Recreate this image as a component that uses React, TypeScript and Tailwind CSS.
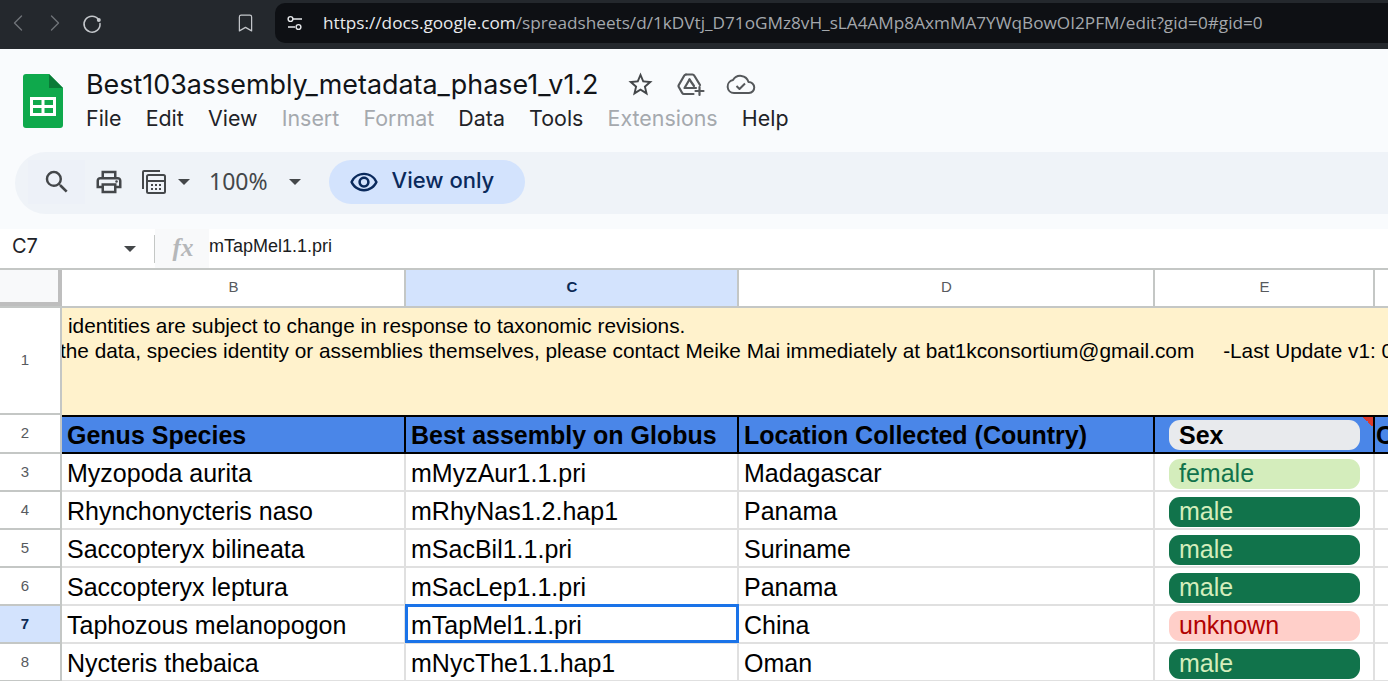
import React from "react";
import { ChevronLeft, ChevronRight, Bookmark } from "lucide-react";
import { MdOutlineSearch, MdOutlinePrint, MdOutlineRemoveRedEye, MdStarBorder } from "react-icons/md";

const rows = [
  { n: 3, a: "Myzopoda aurita", b: "mMyzAur1.1.pri", c: "Madagascar", s: "female" },
  { n: 4, a: "Rhynchonycteris naso", b: "mRhyNas1.2.hap1", c: "Panama", s: "male" },
  { n: 5, a: "Saccopteryx bilineata", b: "mSacBil1.1.pri", c: "Suriname", s: "male" },
  { n: 6, a: "Saccopteryx leptura", b: "mSacLep1.1.pri", c: "Panama", s: "male" },
  { n: 7, a: "Taphozous melanopogon", b: "mTapMel1.1.pri", c: "China", s: "unknown" },
  { n: 8, a: "Nycteris thebaica", b: "mNycThe1.1.hap1", c: "Oman", s: "male" },
];

function chip(s: string) {
  if (s === "female") return "bg-[#d4edbc] text-[#11734b]";
  if (s === "male") return "bg-[#11734b] text-[#d4edbc]";
  return "bg-[#ffcfc9] text-[#b10202]";
}

function Menu({ children, off }: { children: string; off?: boolean }) {
  return <span className={off ? "text-[#a5a9ae]" : "text-[#1f2328]"}>{children}</span>;
}

function ColHead({ w, label, active }: { w: string; label: string; active?: boolean }) {
  return (
    <div
      className={`${w} shrink-0 h-full flex items-center justify-center border-r-2 border-[#c4c7c5] pb-[2px] pl-[1px] text-[15px] ${
        active ? "bg-[#d3e3fd] text-[#0b2a55] font-bold" : "bg-white text-[#575a5e]"
      }`}
    >
      {label}
    </div>
  );
}

function RowHead({ n, active }: { n: number; active?: boolean }) {
  return (
    <div
      className={`w-[62px] shrink-0 flex items-center justify-center border-r-2 border-b-2 border-[#c4c7c5] pr-[10px] text-[15px] ${
        active ? "bg-[#d3e3fd] text-[#0b2a55] font-bold" : "bg-white text-[#575a5e]"
      }`}
    >
      {n}
    </div>
  );
}

export default function App() {
  return (
    <div className="w-[1388px] h-[681px] overflow-hidden bg-[#f9fbfd] flex flex-col font-['Inter',sans-serif]">
      {/* browser bar */}
      <div className="h-[49px] shrink-0 bg-[#24282d] flex items-start">
        <div className="w-[275px] h-[46px] flex items-center shrink-0 text-[#6f7378]">
          <ChevronLeft className="w-[28px] h-[30px] ml-[4px]" strokeWidth={1.2} />
          <ChevronRight className="w-[28px] h-[30px] ml-[9px]" strokeWidth={1.2} />
          <svg viewBox="0 0 24 24" className="w-[24px] h-[24px] ml-[11px] text-[#c4c7cb]" fill="none" stroke="currentColor" strokeWidth="1.5">
            <path d="M18.6 8.6A8 8 0 1 0 20 12.5" strokeLinecap="round" />
            <circle cx="18.8" cy="9" r="2" fill="currentColor" stroke="none" />
          </svg>
          <Bookmark className="w-[21px] h-[24px] ml-[131px] text-[#c4c7cb]" strokeWidth={1.4} />
        </div>
        <div className="flex-1 h-[40px] mt-[3px] bg-[#0e1014] rounded-l-[10px] flex items-center text-[17.2px] font-['Open_Sans',sans-serif] whitespace-nowrap">
          <svg viewBox="0 0 18 18" className="w-[18px] h-[18px] ml-[11px] text-[#e6e8ea]" fill="none" stroke="currentColor" strokeWidth="1.4">
            <circle cx="4.5" cy="5" r="2.4" />
            <path d="M7 5h9M2 13h7" />
            <circle cx="12.5" cy="13" r="2.4" />
          </svg>
          <span className="ml-[19px] text-[#e8eaed]">
            https://docs.google.com<span className="text-[#a4a8ad]">/spreadsheets/d/1kDVtj_D71oGMz8vH_sLA4AMp8AxmMA7YWqBowOI2PFM/edit?gid=0#gid=0</span>
          </span>
        </div>
      </div>

      {/* title */}
      <div className="h-[103px] shrink-0 flex">
        <svg viewBox="0 0 40 54" className="w-[40px] h-[54px] ml-[23px] mt-[25px] shrink-0">
          <path d="M3 0h23l14 14v37a3 3 0 0 1-3 3H3a3 3 0 0 1-3-3V3a3 3 0 0 1 3-3z" fill="#0fa94c" />
          <path d="M26 0l14 14H26z" fill="#0a7a37" />
          <path d="M7 23h26v19H7zM10 26v5h8.5v-5zM21.5 26v5H30v-5zM10 34v5h8.5v-5zM21.5 34v5H30v-5z" fill="#fff" fillRule="evenodd" />
        </svg>
        <div className="ml-[23px] pt-[17px]">
          <div className="flex items-center h-[36px]">
            <span className="text-[26.9px] text-[#111418] leading-none">Best103assembly_metadata_phase1_v1.2</span>
            <MdStarBorder className="w-[29px] h-[29px] ml-[28px] text-[#44474a]" />
            <svg viewBox="0 0 28 25" className="w-[28px] h-[25px] ml-[22px] text-[#55585b]" fill="none" stroke="currentColor" strokeWidth="2.2" strokeLinejoin="round" strokeLinecap="round">
              <path d="M9 2.5h6.5a2 2 0 0 1 1.7 1L23 13" />
              <path d="M9 2.5a2 2 0 0 0-1.7 1L1.8 13a2 2 0 0 0 0 2l3.4 6a2 2 0 0 0 1.8 1h9.5" />
              <path d="M12.5 7.5L7.5 16h11.5" />
              <path d="M12.5 7.5L17 14" />
              <path d="M22.5 15v8M18.5 19h8" />
            </svg>
            <svg viewBox="0 0 30 22" className="w-[30px] h-[22px] ml-[21px] text-[#55585b]" fill="none" stroke="currentColor" strokeWidth="2" strokeLinejoin="round">
              <path d="M8 20a6.5 6.5 0 0 1-1-12.9A8.5 8.5 0 0 1 22.5 9 5.5 5.5 0 0 1 23 20z" />
              <path d="M10.5 13l3 3 5.5-5.5" />
            </svg>
          </div>
          <div className="flex gap-[24.2px] text-[21.4px] leading-none mt-[6px]">
            <Menu>File</Menu>
            <Menu>Edit</Menu>
            <Menu>View</Menu>
            <Menu off>Insert</Menu>
            <Menu off>Format</Menu>
            <Menu>Data</Menu>
            <Menu>Tools</Menu>
            <Menu off>Extensions</Menu>
            <Menu>Help</Menu>
          </div>
        </div>
      </div>

      {/* toolbar */}
      <div className="h-[62px] shrink-0 ml-[15px] bg-[#eff3f8] rounded-l-[31px] flex items-center pb-[3px] text-[#44474a]">
        <div className="w-[57px] h-[44px] ml-[13px] bg-[#edf1f8] flex items-center justify-center">
          <MdOutlineSearch className="w-[30px] h-[30px]" />
        </div>
        <MdOutlinePrint className="w-[30px] h-[30px] ml-[9px]" />
        <svg viewBox="0 0 26 26" className="w-[26px] h-[26px] ml-[17px]" fill="none" stroke="currentColor" strokeWidth="2">
          <path d="M2 20V3a1 1 0 0 1 1-1h16" />
          <rect x="6" y="6" width="18" height="18" rx="1.5" />
          <path d="M6 12h18" />
          <path d="M10 16h2M14 16h2M18 16h2M10 20h2M14 20h2M18 20h2" />
        </svg>
        <div className="ml-[11px] w-0 h-0 border-x-[6.5px] border-x-transparent border-t-[6.5px] border-t-[#44474a]" />
        <span className="ml-[19px] text-[23px] font-['Noto_Sans',sans-serif] leading-none">100%</span>
        <div className="ml-[21px] w-0 h-0 border-x-[6.5px] border-x-transparent border-t-[6.5px] border-t-[#44474a]" />
        <div className="ml-[28px] w-[196px] h-[44px] rounded-full bg-[#d3e3fd] flex items-center text-[#0a2a5c]">
          <MdOutlineRemoveRedEye className="w-[30px] h-[30px] ml-[20px]" />
          <span className="ml-[13px] text-[22px] font-medium pb-[3px]">View only</span>
        </div>
      </div>

      {/* formula bar */}
      <div className="h-[41px] mt-[15px] shrink-0 bg-white border-b-2 border-[#c4c7c5] flex items-center font-['Liberation_Sans',sans-serif]">
        <span className="ml-[12px] text-[20px] text-[#1f2328] font-['Inter',sans-serif] w-[112px] pb-[5px] leading-none">C7</span>
        <div className="w-0 h-0 border-x-[6.5px] border-x-transparent border-t-[6.5px] border-t-[#44474a]" />
        <div className="ml-[18px] w-px h-[28px] bg-[#c4c7c5]" />
        <div className="w-[54px] h-[39px] bg-[#f8f9fa] flex items-center justify-center pl-[2px] pb-[2px]">
          <span className="text-[#b5b7b9] text-[25px] italic font-bold font-['Liberation_Serif',serif] leading-none">fx</span>
        </div>
        <span className="text-[18px] text-[#1a1c1e] pb-[6px] leading-none">mTapMel1.1.pri</span>
      </div>

      {/* grid */}
      <div className="flex-1 min-h-0 font-['Liberation_Sans',sans-serif]">
        {/* column heads */}
        <div className="h-[36px] flex items-stretch">
          <div className="w-[62px] shrink-0 bg-[#f8f9fa] border-r-[4px] border-b-[4px] border-[#bebebe]" />
          <ColHead w="w-[344px]" label="B" />
          <ColHead w="w-[333px]" label="C" active />
          <ColHead w="w-[416px]" label="D" />
          <ColHead w="w-[220px]" label="E" />
          <div className="flex-1 bg-white" />
        </div>
        <div className="h-[2px] bg-[#c4c7c5]" />

        {/* row 1 */}
        <div className="h-[107px] flex">
          <RowHead n={1} />
          <div className="flex-1 min-w-0 overflow-hidden bg-[#fff2cc] pt-[5px] text-[20.8px] leading-[25px] text-black whitespace-nowrap">
            <div className="ml-[6px]">identities are subject to change in response to taxonomic revisions.</div>
            <div className="-ml-[2px]">the data, species identity or assemblies themselves, please contact Meike Mai immediately at bat1kconsortium@gmail.com &nbsp; &nbsp; -Last Update v1: 05/2024</div>
          </div>
        </div>

        {/* row 2 */}
        <div className="h-[39px] flex">
          <RowHead n={2} />
          <div className="flex-1 min-w-0 flex bg-[#4a86e8] border-y-2 border-black text-[25px] font-bold text-black overflow-hidden">
            <div className="w-[344px] shrink-0 border-r-2 border-black pl-[5px] pt-[2px] flex items-center">Genus Species</div>
            <div className="w-[333px] shrink-0 border-r-2 border-black pl-[5px] pt-[2px] flex items-center">Best assembly on Globus</div>
            <div className="w-[416px] shrink-0 border-r-2 border-black pl-[5px] pt-[2px] flex items-center">Location Collected (Country)</div>
            <div className="relative w-[220px] shrink-0 border-r-2 border-black pt-[1px] flex items-center">
              <div className="ml-[14px] w-[191px] h-[30px] rounded-[11px] bg-[#e8eaed] pl-[10px] pt-[1px] flex items-center">Sex</div>
              <div className="absolute top-0 right-0 w-[10px] h-[10px] bg-[linear-gradient(45deg,transparent_50%,#db3b2e_50%)]" />
            </div>
            <div className="pl-[1px] pt-[2px] flex items-center">C</div>
          </div>
        </div>

        {rows.map((r) => (
          <div key={r.n} className="h-[38px] flex text-[25px] text-black">
            <RowHead n={r.n} active={r.n === 7} />
            <div className="w-[344px] shrink-0 border-r-2 border-b-2 border-[#e0e0e0] pl-[5px] pt-[4px] flex items-center bg-white whitespace-nowrap">{r.a}</div>
            <div className="relative w-[333px] shrink-0 border-r-2 border-b-2 border-[#e0e0e0] pl-[5px] pt-[4px] flex items-center bg-white whitespace-nowrap">
              {r.b}
              {r.n === 7 && <div className="absolute -left-[1px] -top-[2px] w-[334px] h-[39px] border-[3px] border-[#1a73e8]" />}
            </div>
            <div className="w-[416px] shrink-0 border-r-2 border-b-2 border-[#e0e0e0] pl-[5px] pt-[4px] flex items-center bg-white">{r.c}</div>
            <div className="w-[220px] shrink-0 border-r-2 border-b-2 border-[#e0e0e0] pt-[3px] flex items-center bg-white">
              <div className={`ml-[14px] w-[191px] h-[30px] rounded-[11px] pl-[10px] flex items-center ${chip(r.s)}`}>{r.s}</div>
            </div>
            <div className="flex-1 border-b-2 border-[#e0e0e0] bg-white" />
          </div>
        ))}
      </div>
    </div>
  );
}
